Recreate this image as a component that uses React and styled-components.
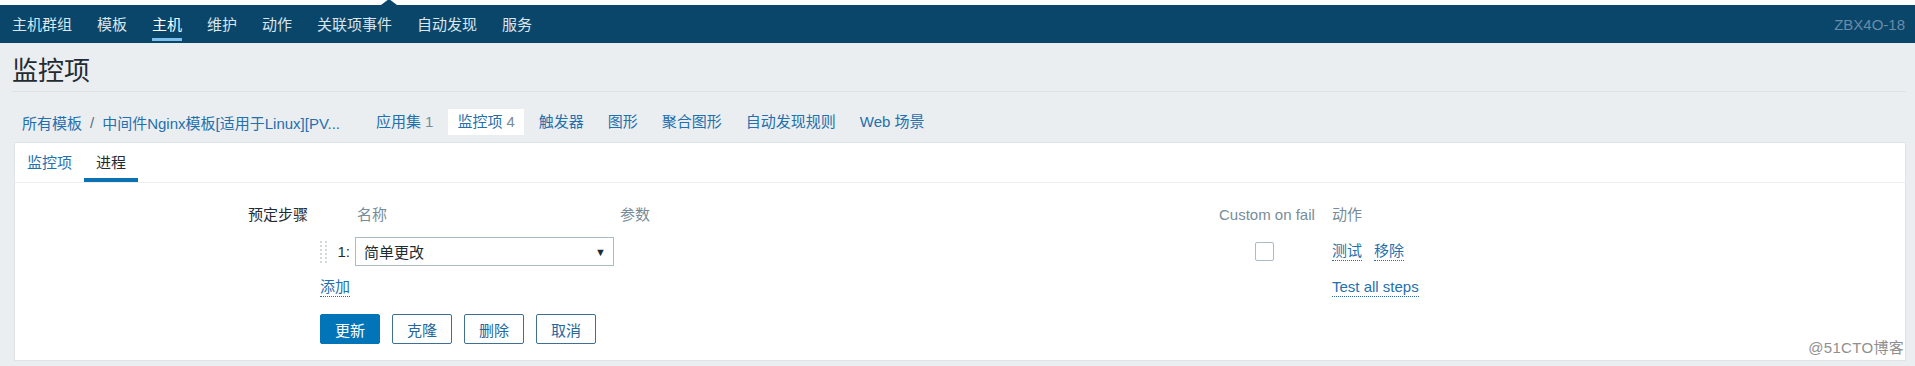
import React from 'react';
import styled, { createGlobalStyle } from 'styled-components';

const GlobalStyle = createGlobalStyle`
  html, body {
    margin: 0;
    padding: 0;
    background: #ebeef0;
  }
  body {
    font-family: "Liberation Sans", Arial, "Noto Sans CJK SC", sans-serif;
    font-size: 15px;
    color: #1f2c33;
  }
  * { box-sizing: border-box; }
`;

const TopStrip = styled.div`
  position: relative;
  height: 5px;
  background: #ffffff;
`;

const Notch = styled.span`
  position: absolute;
  left: 381px;
  bottom: 0;
  width: 0;
  height: 0;
  border-left: 8px solid transparent;
  border-right: 8px solid transparent;
  border-bottom: 6px solid #0a466a;
`;

const NavBar = styled.div`
  height: 38px;
  background: #0a466a;
  display: flex;
  align-items: stretch;
  justify-content: space-between;
  padding: 0 10px 0 12px;
`;

const NavList = styled.div`
  display: flex;
  gap: 25px;
`;

const NavItem = styled.a`
  position: relative;
  display: flex;
  align-items: center;
  padding-bottom: 2px;
  color: ${p => (p.$active ? '#ffffff' : '#dbe5ec')};
  text-decoration: none;
  &::after {
    content: '';
    display: ${p => (p.$active ? 'block' : 'none')};
    position: absolute;
    left: 0;
    right: 0;
    bottom: 2px;
    height: 3px;
    background: #7cc1ee;
  }
`;

const ServerName = styled.div`
  display: flex;
  align-items: center;
  color: #6b8ba6;
`;

const Main = styled.div`
  padding: 0 9px 0 12px;
`;

const Header = styled.div`
  padding: 13px 0 5px;
  border-bottom: 1px solid #dde2e6;
`;

const Title = styled.h1`
  margin: 0;
  font-size: 26px;
  line-height: 30px;
  font-weight: normal;
  color: #1f2c33;
`;

const CrumbBar = styled.div`
  display: flex;
  align-items: center;
  padding: 17px 0 7px 10px;
`;

const Crumbs = styled.div`
  display: flex;
  align-items: center;
  gap: 8px;
  margin-right: 27px;
`;

const CrumbLink = styled.a`
  color: #2470ad;
  text-decoration: none;
  white-space: nowrap;
`;

const CrumbSep = styled.span`
  color: #55707f;
`;

const SubNav = styled.div`
  display: flex;
  gap: 6px;
`;

const SubItem = styled.a`
  height: 26px;
  line-height: 26px;
  padding: 0 9px;
  color: #2470ad;
  text-decoration: none;
  background: ${p => (p.$active ? '#ffffff' : 'transparent')};
  white-space: nowrap;
`;

const Count = styled.span`
  color: #768d99;
  margin-left: 4px;
`;

const Panel = styled.div`
  position: relative;
  margin-left: 2px;
  background: #ffffff;
  border: 1px solid #dfe4e7;
`;

const TabBar = styled.div`
  display: flex;
  height: 40px;
  border-bottom: 1px solid #ebeef0;
`;

const Tab = styled.a`
  position: relative;
  padding: 2px 12px 0;
  line-height: 35px;
  color: ${p => (p.$active ? '#1f2c33' : '#2470ad')};
  text-decoration: none;
  &::after {
    content: '';
    display: ${p => (p.$active ? 'block' : 'none')};
    position: absolute;
    left: 0;
    right: 0;
    bottom: 0;
    height: 4px;
    background: #0b71b0;
  }
`;

const Form = styled.div`
  display: grid;
  grid-template-columns: 293px 1fr;
  column-gap: 12px;
  padding: 22px 0 16px;
`;

const FieldLabel = styled.div`
  text-align: right;
  line-height: 20px;
  color: #1f2c33;
`;

const StepsTable = styled.div`
  display: grid;
  grid-template-columns: 35px 265px 599px 95px 1fr;
  row-gap: 12px;
  align-items: center;
`;

const ColHead = styled.div`
  line-height: 20px;
  color: #768d99;
  white-space: nowrap;
  padding-left: ${p => p.$pad || 0}px;
`;

const IndexCell = styled.div`
  display: flex;
  align-items: center;
  justify-content: space-between;
  padding-right: 5px;
  color: #1f2c33;
`;

const SelectBox = styled.div`
  width: 259px;
  height: 29px;
  border: 1px solid #acbbc2;
  background: #ffffff;
  display: flex;
  align-items: center;
  justify-content: space-between;
  padding: 0 7px 0 8px;
  color: #1f2c33;
`;

const Caret = styled.span`
  font-size: 11px;
  color: #1f2c33;
`;

const CheckBox = styled.span`
  justify-self: center;
  margin-right: 5px;
  width: 19px;
  height: 19px;
  border: 1px solid #acbbc2;
  border-radius: 2px;
  background: #ffffff;
`;

const Actions = styled.div`
  display: flex;
  gap: 12px;
  padding-left: 18px;
`;

const DotLink = styled.a`
  color: #2470ad;
  text-decoration: none;
  line-height: 18px;
  border-bottom: 1px dotted #2470ad;
  white-space: nowrap;
  justify-self: start;
  grid-column: ${p => p.$span || 'auto'};
  margin-left: ${p => p.$offset || 0}px;
`;

const Buttons = styled.div`
  display: flex;
  gap: 12px;
  margin-top: 17px;
`;

const Button = styled.button`
  height: 30px;
  min-width: 60px;
  padding: 0 14px;
  font-family: inherit;
  font-size: 15px;
  border: 1px solid ${p => (p.$primary ? '#0275b8' : '#3f6f94')};
  border-radius: 2px;
  background: ${p => (p.$primary ? '#0275b8' : '#ffffff')};
  color: ${p => (p.$primary ? '#ffffff' : '#23679e')};
`;

const Watermark = styled.div`
  position: absolute;
  right: 1px;
  bottom: 3px;
  font-size: 15px;
  letter-spacing: 0.3px;
  color: #8f8f8f;
`;

const Grip = () => (
  <svg width="8" height="22" viewBox="0 0 8 22">
    {[1, 5, 9, 13, 17, 21].map(y => (
      <g key={y} fill="#d3d9dd">
        <rect x="0" y={y - 1} width="2" height="2" />
        <rect x="5" y={y - 1} width="2" height="2" />
      </g>
    ))}
  </svg>
);

const navItems = ['主机群组', '模板', '主机', '维护', '动作', '关联项事件', '自动发现', '服务'];

const subItems = [
  { label: '应用集', count: 1 },
  { label: '监控项', count: 4, active: true },
  { label: '触发器' },
  { label: '图形' },
  { label: '聚合图形' },
  { label: '自动发现规则' },
  { label: 'Web 场景' },
];

export default function App() {
  return (
    <>
      <GlobalStyle />
      <TopStrip>
        <Notch />
      </TopStrip>
      <NavBar>
        <NavList>
          {navItems.map(item => (
            <NavItem key={item} $active={item === '主机'}>{item}</NavItem>
          ))}
        </NavList>
        <ServerName>ZBX4O-18</ServerName>
      </NavBar>

      <Main>
        <Header>
          <Title>监控项</Title>
        </Header>

        <CrumbBar>
          <Crumbs>
            <CrumbLink>所有模板</CrumbLink>
            <CrumbSep>/</CrumbSep>
            <CrumbLink>中间件Nginx模板[适用于Linux][PV...</CrumbLink>
          </Crumbs>
          <SubNav>
            {subItems.map(s => (
              <SubItem key={s.label} $active={s.active}>
                {s.label}
                {s.count && <Count>{s.count}</Count>}
              </SubItem>
            ))}
          </SubNav>
        </CrumbBar>

        <Panel>
          <TabBar>
            <Tab>监控项</Tab>
            <Tab $active>进程</Tab>
          </TabBar>

          <Form>
            <FieldLabel>预定步骤</FieldLabel>
            <div>
              <StepsTable>
                <div />
                <ColHead $pad={2}>名称</ColHead>
                <ColHead>参数</ColHead>
                <ColHead>Custom on fail</ColHead>
                <ColHead $pad={18}>动作</ColHead>

                <IndexCell>
                  <Grip />
                  <span>1:</span>
                </IndexCell>
                <SelectBox>
                  <span>简单更改</span>
                  <Caret>▼</Caret>
                </SelectBox>
                <div />
                <CheckBox />
                <Actions>
                  <DotLink>测试</DotLink>
                  <DotLink>移除</DotLink>
                </Actions>

                <DotLink $span="1 / 4">添加</DotLink>
                <div />
                <DotLink $offset={18}>Test all steps</DotLink>
              </StepsTable>

              <Buttons>
                <Button $primary>更新</Button>
                <Button>克隆</Button>
                <Button>删除</Button>
                <Button>取消</Button>
              </Buttons>
            </div>
          </Form>

          <Watermark>@51CTO博客</Watermark>
        </Panel>
      </Main>
    </>
  );
}
